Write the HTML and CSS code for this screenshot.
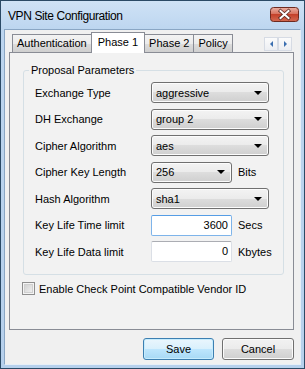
FILE: index.html
```html
<!DOCTYPE html>
<html lang="en">
<head>
  <meta charset="UTF-8">
  <meta name="viewport" content="width=device-width, initial-scale=1.0">
  <title>VPN Site Configuration</title>
  <link rel="stylesheet" href="styles.css">
</head>
<body>
<div class="window">
  <div class="titlebar">
    <span class="title">VPN Site Configuration</span>
    <button class="close" aria-label="Close">
      <svg width="29" height="15" viewBox="0 0 29 15">
        <defs>
          <linearGradient id="red" x1="0" y1="0" x2="0" y2="1">
            <stop offset="0" stop-color="#eab0a4"/>
            <stop offset="0.45" stop-color="#d8735f"/>
            <stop offset="0.5" stop-color="#c4412a"/>
            <stop offset="1" stop-color="#d36a52"/>
          </linearGradient>
        </defs>
        <rect x="0.5" y="0.5" width="28" height="14" rx="3" fill="url(#red)" stroke="#6d2a20"/>
        <path d="M10.5 4 L18.5 11 M18.5 4 L10.5 11" stroke="#5a2a22" stroke-width="3.6" stroke-linecap="square"/>
        <path d="M10.5 4 L18.5 11 M18.5 4 L10.5 11" stroke="#fff" stroke-width="2" stroke-linecap="square"/>
      </svg>
    </button>
  </div>

  <div class="client">
    <div class="tabs">
      <div class="tab">Authentication</div>
      <div class="tab active">Phase 1</div>
      <div class="tab">Phase 2</div>
      <div class="tab">Policy</div>
      <div class="tab-scroll">
        <span class="scroll-btn"><span class="tri left"></span></span>
        <span class="scroll-btn"><span class="tri right"></span></span>
      </div>
    </div>

    <div class="pane">
      <fieldset class="group">
        <legend>Proposal Parameters</legend>
        <div class="grid">
          <span class="label">Exchange Type</span>
          <div class="field"><div class="combo"><span>aggressive</span><i class="down"></i></div></div>

          <span class="label">DH Exchange</span>
          <div class="field"><div class="combo"><span>group 2</span><i class="down"></i></div></div>

          <span class="label">Cipher Algorithm</span>
          <div class="field"><div class="combo"><span>aes</span><i class="down"></i></div></div>

          <span class="label">Cipher Key Length</span>
          <div class="field"><div class="combo short"><span>256</span><i class="down"></i></div><span class="unit">Bits</span></div>

          <span class="label">Hash Algorithm</span>
          <div class="field"><div class="combo"><span>sha1</span><i class="down"></i></div></div>

          <span class="label">Key Life Time limit</span>
          <div class="field"><div class="textbox focus">3600</div><span class="unit">Secs</span></div>

          <span class="label">Key Life Data limit</span>
          <div class="field"><div class="textbox">0</div><span class="unit">Kbytes</span></div>
        </div>
      </fieldset>

      <label class="check"><span class="box"></span>Enable Check Point Compatible Vendor ID</label>
    </div>

    <div class="buttons">
      <button class="btn default">Save</button>
      <button class="btn">Cancel</button>
    </div>
  </div>
</div>
</body>
</html>
```

FILE: styles.css
```css
body {
  margin: 0;
  font-family: "Liberation Sans", Arial, sans-serif;
  font-size: 11px;
  color: #000;
}

.window {
  width: 305px;
  height: 369px;
  box-sizing: border-box;
  border: 1px solid #2b4a66;
  padding: 0 3px 3px 3px;
  background: linear-gradient(#cfe2f6, #bcd5ef 30px, #b6d0ec);
  display: flex;
  flex-direction: column;
}

.titlebar {
  height: 28px;
  display: flex;
  align-items: center;
  justify-content: space-between;
  padding-left: 4px;
}
.title {
  font-size: 12px;
  letter-spacing: -0.4px;
  color: #000;
  margin-top: 1px;
}
.close {
  border: none;
  background: none;
  padding: 0;
  width: 29px;
  height: 15px;
  margin-right: 2px;
  margin-top: -2px;
  display: block;
}
.close svg {
  display: block;
}

.client {
  height: 336px;
  box-sizing: border-box;
  background: #f0f0f0;
  border: 1px solid #e6eef7;
  border-color: #8aa6c4 #e6eef7 #e6eef7 #8aa6c4;
  padding: 2px 6px 0 4px;
}

/* tabs */
.tabs {
  display: flex;
  align-items: flex-end;
  height: 20px;
  padding-left: 3px;
  position: relative;
  z-index: 1;
}
.tab {
  height: 18px;
  line-height: 17px;
  box-sizing: border-box;
  padding: 0 4px;
  border: 1px solid #898c95;
  border-bottom: none;
  margin-left: -1px;
  background: linear-gradient(#f3f3f3, #ebebeb 50%, #dddddd 50%, #cfcfcf);
}
.tab:first-child {
  margin-left: 0;
}
.tab.active {
  height: 21px;
  line-height: 19px;
  margin-bottom: -1px;
  padding: 0 6px;
  background: #fff;
  position: relative;
}
.tab-scroll {
  margin-left: auto;
  margin-right: 2px;
  margin-bottom: 1px;
  display: flex;
}
.scroll-btn {
  width: 14px;
  height: 14px;
  box-sizing: border-box;
  border: 1px solid #d6dbe4;
  background: linear-gradient(#fbfbfb, #eceef2);
  display: flex;
  align-items: center;
  justify-content: center;
}
.tri {
  width: 0;
  height: 0;
  border-top: 3px solid transparent;
  border-bottom: 3px solid transparent;
}
.tri.left {
  border-right: 3px solid #3b6fb0;
}
.tri.right {
  border-left: 3px solid #3b6fb0;
}

.pane {
  height: 278px;
  box-sizing: border-box;
  border: 1px solid #898c95;
  background: #f2f2f2;
  padding: 11px 10px 0 13px;
}

/* group box */
.group {
  margin: 0;
  border: 1px solid #d5dfe5;
  border-radius: 3px;
  padding: 5px 11px 12px 11px;
}
.group legend {
  padding: 0 2px;
  margin-left: -6px;
  line-height: 13px;
}
.grid {
  display: grid;
  grid-template-columns: 116px auto;
  grid-auto-rows: 21px;
  row-gap: 5.5px;
  align-items: center;
}
.field {
  display: flex;
  align-items: center;
  gap: 6px;
}

.combo {
  width: 118px;
  height: 21px;
  box-sizing: border-box;
  border: 1px solid #707070;
  border-radius: 3px;
  background: linear-gradient(#f3f3f3, #ebebeb 50%, #dddddd 50%, #cfcfcf);
  box-shadow: inset 0 0 0 1px #fcfcfc;
  display: flex;
  align-items: center;
  justify-content: space-between;
  padding: 0 6px 0 4px;
}
.combo.short {
  width: 81px;
}
.down {
  width: 0;
  height: 0;
  border-left: 4px solid transparent;
  border-right: 4px solid transparent;
  border-top: 4px solid #000;
}

.textbox {
  width: 81px;
  height: 21px;
  box-sizing: border-box;
  background: #fff;
  border: 1px solid #dbdfe6;
  border-top-color: #abadb3;
  border-radius: 2px;
  text-align: right;
  line-height: 19px;
  padding-right: 3px;
}
.textbox.focus {
  border-color: #7eb4ea;
  border-top-color: #569de5;
}

.check {
  display: flex;
  align-items: center;
  gap: 4px;
  margin: 7px 0 0 -1px;
}
.box {
  width: 13px;
  height: 13px;
  box-sizing: border-box;
  border: 1px solid #8f8f8f;
  background: linear-gradient(135deg, #cbcbcb, #f6f6f6);
  box-shadow: inset 0 0 0 1px #f4f4f4, inset 0 0 0 2px #d0d0d0;
}

/* dialog buttons */
.buttons {
  display: flex;
  justify-content: flex-end;
  gap: 8px;
  margin-top: 8px;
}
.btn {
  font-family: "Liberation Sans", Arial, sans-serif;
  font-size: 11px;
  color: #000;
  height: 22px;
  width: 72px;
  box-sizing: border-box;
  border: 1px solid #707070;
  border-radius: 3px;
  background: linear-gradient(#f2f2f2, #ebebeb 50%, #dddddd 50%, #cfcfcf);
  box-shadow: inset 0 0 0 1px #fbfbfb;
  padding: 0;
}
.btn.default {
  width: 71px;
  border-color: #3c7fb1;
  background: linear-gradient(#eaf6fd, #d9f0fc 50%, #bee6fd 50%, #a7d9f5);
  box-shadow: inset 0 0 0 1px #c6ecfd;
}
```
